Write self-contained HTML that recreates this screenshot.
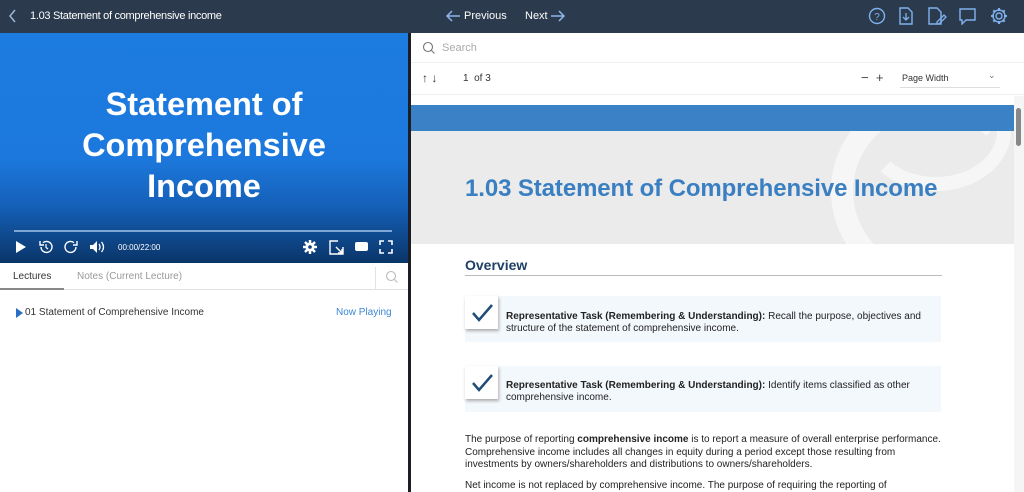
<!DOCTYPE html>
<html><head><style>
*{margin:0;padding:0;box-sizing:border-box}
body{width:1024px;height:492px;overflow:hidden;font-family:"Liberation Sans",sans-serif;background:#fff;position:relative}
.top{position:absolute;left:0;top:0;width:1024px;height:33px;background:#2b3a4c;color:#fff;font-size:11px}
.abs{position:absolute}
.video{position:absolute;left:0;top:33px;width:408px;height:230px;background:linear-gradient(#1d7ce0 0%,#1c78dc 55%,#1560b8 75%,#0a3568 100%)}
.vt{position:absolute;left:0;width:408px;text-align:center;color:#fff;font-weight:bold;font-size:32.5px;line-height:41px;top:51px}
.divider{position:absolute;left:408px;top:33px;width:3px;height:459px;background:#1b1f25}
svg{position:absolute}
</style></head><body>
<div class="top">
<svg style="left:8px;top:9px" width="10" height="14"><path d="M7 1L2 7l5 6" stroke="#9ab6d8" stroke-width="1.5" fill="none"/></svg>
<div class="abs" style="left:30px;top:10px;letter-spacing:-0.3px">1.03 Statement of comprehensive income</div>
<svg style="left:445px;top:9px" width="16" height="14"><path d="M15 7H2M7 2L2 7l5 5" stroke="#8fb6e8" stroke-width="1.5" fill="none"/></svg>
<div class="abs" style="left:464px;top:10px">Previous</div>
<div class="abs" style="left:525px;top:10px">Next</div>
<svg style="left:550px;top:9px" width="16" height="14"><path d="M1 7h13M9 2l5 5-5 5" stroke="#8fb6e8" stroke-width="1.5" fill="none"/></svg>
<svg style="left:868px;top:7px" width="18" height="18"><circle cx="9" cy="9" r="7.5" stroke="#7fb2ef" stroke-width="1.4" fill="none"/><text x="9" y="13" font-size="10" fill="#7fb2ef" text-anchor="middle" font-family="Liberation Sans">?</text></svg>
<svg style="left:898px;top:6px" width="16" height="20"><path d="M2 2h8l4 4v12H2z" stroke="#7fb2ef" stroke-width="1.4" fill="none"/><path d="M8 7v7M5 11l3 3 3-3" stroke="#7fb2ef" stroke-width="1.3" fill="none"/></svg>
<svg style="left:927px;top:6px" width="20" height="20"><path d="M2 2h8l4 4v12H2z" stroke="#7fb2ef" stroke-width="1.4" fill="none"/><path d="M10 16l7-7 2 2-7 7h-2z" stroke="#7fb2ef" stroke-width="1.3" fill="none"/></svg>
<svg style="left:958px;top:7px" width="20" height="18"><path d="M2 2h15v11H8l-4 4v-4H2z" stroke="#7fb2ef" stroke-width="1.4" fill="none"/></svg>
<svg style="left:989px;top:6px" width="20" height="20"><circle cx="10" cy="10" r="3" stroke="#7fb2ef" stroke-width="1.4" fill="none"/><path d="M10 2v3M10 15v3M2 10h3M15 10h3M4.3 4.3l2 2M13.7 13.7l2 2M4.3 15.7l2-2M13.7 6.3l2-2" stroke="#7fb2ef" stroke-width="2"/><circle cx="10" cy="10" r="6" stroke="#7fb2ef" stroke-width="1.4" fill="none"/></svg>
</div>

<div class="video">
<div class="vt">Statement of<br>Comprehensive<br>Income</div>
<div class="abs" style="left:14px;top:197px;width:378px;height:2px;background:#7ea7d6"></div>
<svg style="left:15px;top:207px" width="12" height="14"><path d="M1 1l10 6-10 6z" fill="#fff"/></svg>
<svg style="left:38px;top:206px" width="16" height="16"><path d="M3 8a5.5 5.5 0 1 0 2-4.3M2 2v4h4" stroke="#fff" stroke-width="1.4" fill="none"/><path d="M8 5v3.5l2 1.5" stroke="#fff" stroke-width="1.2" fill="none"/></svg>
<svg style="left:63px;top:206px" width="16" height="16"><path d="M13 8a5.5 5.5 0 1 1-2-4.3M14 2v4h-4" stroke="#fff" stroke-width="1.4" fill="none"/></svg>
<svg style="left:89px;top:207px" width="18" height="14"><path d="M1 5h3l4-4v12l-4-4H1z" fill="#fff"/><path d="M10 4q2 3 0 6M12.5 2q4 5 0 10" stroke="#fff" stroke-width="1.3" fill="none"/></svg>
<div class="abs" style="left:118px;top:210px;color:#fff;font-size:8px">00:00/22:00</div>
<svg style="left:303px;top:207px" width="14" height="14"><circle cx="7" cy="7" r="4.5" fill="#fff"/><path d="M7 0v14M0 7h14M2 2l10 10M12 2L2 12" stroke="#fff" stroke-width="2.5"/><circle cx="7" cy="7" r="1.8" fill="#0d3f78"/></svg>
<svg style="left:329px;top:207px" width="16" height="15"><path d="M9 1H1v13h13V7" stroke="#fff" stroke-width="1.4" fill="none"/><path d="M7 7l6 6M13 9v4h-4" stroke="#fff" stroke-width="1.4" fill="none"/></svg>
<div class="abs" style="left:355px;top:209px;width:13px;height:9px;background:#fff;border-radius:2px"></div>
<svg style="left:379px;top:207px" width="14" height="14"><path d="M1 5V1h4M9 1h4v4M13 9v4H9M5 13H1V9" stroke="#fff" stroke-width="1.6" fill="none"/></svg>
</div>

<div class="abs" style="left:0;top:263px;width:408px;height:27px;border-bottom:1px solid #e3e3e3;font-size:10px">
<div class="abs" style="left:13px;top:8px;color:#333">Lectures</div>
<div class="abs" style="left:0;top:25px;width:64px;height:2px;background:#888"></div>
<div class="abs" style="left:77px;top:8px;color:#999">Notes (Current Lecture)</div>
<div class="abs" style="left:375px;top:4px;width:1px;height:22px;background:#e3e3e3"></div>
<svg style="left:385px;top:7px" width="14" height="14"><circle cx="6" cy="6" r="4.5" stroke="#bbb" stroke-width="1.1" fill="none"/><path d="M9.5 9.5l3 3" stroke="#bbb" stroke-width="1.1"/></svg>
</div>
<svg style="left:15px;top:308px" width="9" height="10"><path d="M1 0l7 5-7 5z" fill="#2a6fc4"/></svg>
<div class="abs" style="left:25px;top:307px;font-size:10px;color:#333">01 Statement of Comprehensive Income</div>
<div class="abs" style="left:336px;top:307px;font-size:10px;color:#3d87d4">Now Playing</div>

<div class="divider"></div>

<div class="abs" style="left:411px;top:33px;width:613px;height:62px;background:#fff;border-bottom:1px solid #eee"></div>
<svg style="left:422px;top:41px" width="14" height="14"><circle cx="6" cy="6" r="4.5" stroke="#777" stroke-width="1.1" fill="none"/><path d="M9.5 9.5l3 3" stroke="#777" stroke-width="1.1"/></svg>
<div class="abs" style="left:442px;top:42px;font-size:11px;color:#aaa">Search</div>
<div class="abs" style="left:411px;top:62px;width:613px;height:1px;background:#f0f0f0"></div>
<div class="abs" style="left:422px;top:71px;font-size:12px;color:#333">↑ ↓</div>
<div class="abs" style="left:463px;top:73px;font-size:10px;color:#333">1 &nbsp;of 3</div>
<div class="abs" style="left:861px;top:70px;font-size:13px;color:#444">−&nbsp; +</div>
<div class="abs" style="left:902px;top:73px;font-size:9px;color:#333">Page Width</div>
<div class="abs" style="left:988px;top:70px;font-size:9px;color:#777">⌄</div>
<div class="abs" style="left:900px;top:87px;width:100px;height:1px;background:#ddd"></div>

<div class="abs" style="left:411px;top:96px;width:603px;height:396px;background:#fff;overflow:hidden">
<div class="abs" style="left:0;top:9px;width:603px;height:26px;background:#3a82c5"></div>
<div class="abs" style="left:0;top:35px;width:603px;height:113px;background:#ebebeb;overflow:hidden">
<div class="abs" style="left:420px;top:-40px;width:200px;height:200px;border-radius:50%;border:22px solid #f6f6f6;border-right-color:transparent"></div>
<div class="abs" style="left:450px;top:-60px;width:150px;height:120px;border-radius:50%;border:14px solid #f6f6f6;border-top-color:transparent;border-left-color:transparent"></div>
</div>
<div class="abs" style="left:54px;top:79px;font-size:24px;font-weight:bold;color:#3a7fc2;letter-spacing:-0.1px">1.03 Statement of Comprehensive Income</div>
<div class="abs" style="left:54px;top:161px;font-size:14px;font-weight:bold;color:#1f3f66">Overview</div>
<div class="abs" style="left:54px;top:179px;width:477px;height:1px;background:#bbb"></div>
<div class="abs" style="left:54px;top:200px;width:476px;height:46px;background:#f3f8fc"></div>
<div class="abs" style="left:54px;top:200px;width:33px;height:33px;background:#fff;box-shadow:1px 2px 3px #aaa"></div>
<svg style="left:59px;top:206px" width="24" height="22"><path d="M3 11l6 7L22 3" stroke="#1f4d7a" stroke-width="2.5" fill="none"/></svg>
<div class="abs" style="left:95px;top:215px;width:430px;font-size:10px;line-height:12px;color:#222"><b>Representative Task (Remembering &amp; Understanding):</b> Recall the purpose, objectives and structure of the statement of comprehensive income.</div>
<div class="abs" style="left:54px;top:270px;width:476px;height:46px;background:#f3f8fc"></div>
<div class="abs" style="left:54px;top:270px;width:33px;height:33px;background:#fff;box-shadow:1px 2px 3px #aaa"></div>
<svg style="left:59px;top:276px" width="24" height="22"><path d="M3 11l6 7L22 3" stroke="#1f4d7a" stroke-width="2.5" fill="none"/></svg>
<div class="abs" style="left:95px;top:284px;width:430px;font-size:10px;line-height:12px;color:#222"><b>Representative Task (Remembering &amp; Understanding):</b> Identify items classified as other comprehensive income.</div>
<div class="abs" style="left:54px;top:338px;width:490px;font-size:10px;line-height:12.5px;color:#222">The purpose of reporting <b>comprehensive income</b> is to report a measure of overall enterprise performance. Comprehensive income includes all changes in equity during a period except those resulting from<br>investments by owners/shareholders and distributions to owners/shareholders.</div>
<div class="abs" style="left:54px;top:384px;width:500px;font-size:10px;line-height:12.5px;color:#222">Net income is not replaced by comprehensive income. The purpose of requiring the reporting of</div>
</div>
<div class="abs" style="left:1014px;top:96px;width:10px;height:396px;background:#f5f5f5"></div>
<div class="abs" style="left:1016px;top:108px;width:5px;height:38px;background:#888;border-radius:3px"></div>
</body></html>
